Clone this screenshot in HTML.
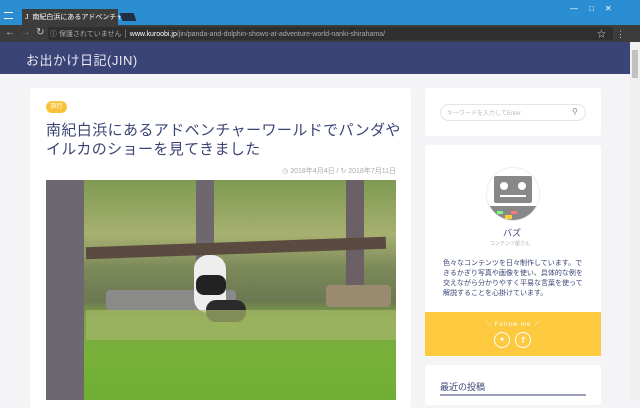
<!DOCTYPE html>
<html><head><meta charset="utf-8"><style>
*{margin:0;padding:0;box-sizing:border-box}
body{width:640px;height:400px;overflow:hidden;background:#f4f4f6;font-family:"Liberation Sans","Noto Sans CJK JP",sans-serif;position:relative}
.abs{position:absolute}
</style></head><body>
<div class="abs" style="left:0;top:0;width:640px;height:25px;background:#2b8ed3"></div>
<div class="abs" style="left:4px;top:12px;width:9px;height:7px;border:1px solid #fff;border-width:1px 0"></div>
<div class="abs" style="left:22px;top:9px;width:96px;height:16px;background:#3c3c3c"></div>
<div class="abs" style="left:25px;top:12px;font-size:7px;color:#fff;white-space:nowrap">J&nbsp; 南紀白浜にあるアドベンチャ ×</div>
<div class="abs" style="left:121px;top:13px;width:14px;height:8px;background:#1f2f44;transform:skewX(20deg)"></div>
<div class="abs" style="left:570px;top:4px;font-size:8px;color:#fff">—&nbsp;&nbsp;&nbsp;&nbsp;&nbsp;□&nbsp;&nbsp;&nbsp;&nbsp;&nbsp;✕</div>
<div class="abs" style="left:0;top:25px;width:640px;height:17px;background:#3c3c3c"></div>
<div class="abs" style="left:5px;top:27px;font-size:10px;color:#ccc">←&nbsp;&nbsp;<span style="color:#777">→</span>&nbsp;&nbsp;↻</div>
<div class="abs" style="left:48px;top:27px;width:565px;height:13px;background:#2f2f2f;border-radius:2px"></div>
<div class="abs" style="left:50px;top:29px;font-size:7px;color:#aaa;white-space:nowrap">ⓘ 保護されていません │ <span style="color:#fff">www.kuroobi.jp</span>/jin/panda-and-dolphin-shows-at-adventure-world-nanki-shirahama/</div>
<div class="abs" style="left:597px;top:27px;font-size:9px;color:#ccc">☆&nbsp;&nbsp;&nbsp;&nbsp;⋮</div>
<div class="abs" style="left:0;top:42px;width:630px;height:32px;background:#3b4476"></div>
<div class="abs" style="left:26px;top:50px;font-size:13px;color:#e8e8f0;letter-spacing:.5px">お出かけ日記(JIN)</div>
<div class="abs" style="left:630px;top:42px;width:10px;height:358px;background:#f0f0f0"></div>
<div class="abs" style="left:632px;top:50px;width:6px;height:28px;background:#c1c1c1"></div>
<div class="abs" style="left:30px;top:88px;width:381px;height:320px;background:#fff;border-radius:3px"></div>
<div class="abs" style="left:46px;top:101px;width:21px;height:12px;background:#f8c33a;border-radius:6px;color:#fff;font-size:6px;text-align:center;line-height:12px">旅行</div>
<div class="abs" style="left:46px;top:121px;white-space:nowrap;font-size:15px;letter-spacing:0.4px;line-height:19px;color:#3b4476">南紀白浜にあるアドベンチャーワールドでパンダや<br>イルカのショーを見てきました</div>
<div class="abs" style="left:200px;top:166px;width:196px;text-align:right;font-size:7px;color:#aaa;white-space:nowrap">◷ 2018年4月4日 / ↻ 2018年7月11日</div>
<div class="abs" style="left:46px;top:180px;width:350px;height:220px;overflow:hidden;background:linear-gradient(#7f9a52 0%,#a7b070 25%,#7c8a5a 40%,#6c7852 55%,#7aa444 62%,#78b13a 80%,#6fae35 100%)">
<div class="abs" style="left:0;top:0;width:38px;height:220px;background:#6d6770"></div>
<div class="abs" style="left:150px;top:0;width:18px;height:115px;background:#6f6770"></div>
<div class="abs" style="left:300px;top:0;width:18px;height:105px;background:#6a6066"></div>
<div class="abs" style="left:40px;top:62px;width:300px;height:12px;background:#5a4a40;transform:rotate(-2deg)"></div>
<div class="abs" style="left:60px;top:110px;width:130px;height:20px;background:#8a8a88;border-radius:4px"></div>
<div class="abs" style="left:280px;top:105px;width:65px;height:22px;background:#9a8a70;border-radius:4px"></div>
<div class="abs" style="left:148px;top:75px;width:32px;height:58px;background:#eee;border-radius:14px"></div>
<div class="abs" style="left:150px;top:95px;width:30px;height:20px;background:#222;border-radius:8px"></div>
<div class="abs" style="left:160px;top:120px;width:40px;height:22px;background:#2a2a2a;border-radius:10px"></div>
<div class="abs" style="left:40px;top:130px;width:310px;height:30px;background:#a7b66a;opacity:.7"></div>
</div>
<div class="abs" style="left:425px;top:88px;width:176px;height:48px;background:#fff;border-radius:3px"></div>
<div class="abs" style="left:440px;top:104px;width:146px;height:17px;border:1px solid #e4e4e4;border-radius:9px"></div>
<div class="abs" style="left:447px;top:108px;font-size:6px;color:#bbb">キーワードを入力してEnter</div>
<div class="abs" style="left:572px;top:107px;font-size:8px;color:#888">⚲</div>
<div class="abs" style="left:425px;top:145px;width:176px;height:212px;background:#fff;border-radius:3px"></div>
<div class="abs" style="left:486px;top:167px;width:54px;height:54px;border-radius:50%;background:#fff;border:1px solid #eee;overflow:hidden">
<div class="abs" style="left:7px;top:8px;width:38px;height:27px;background:#888;border-radius:2px"></div>
<div class="abs" style="left:13px;top:14px;width:8px;height:8px;background:#fff;border-radius:50%"></div>
<div class="abs" style="left:31px;top:14px;width:8px;height:8px;background:#fff;border-radius:50%"></div>
<div class="abs" style="left:13px;top:27px;width:26px;height:2px;background:#fff"></div>
<div class="abs" style="left:2px;top:38px;width:50px;height:16px;background:#888"></div>
<div class="abs" style="left:10px;top:43px;width:6px;height:3px;background:#7f7"></div>
<div class="abs" style="left:24px;top:43px;width:6px;height:3px;background:#f77"></div>
<div class="abs" style="left:18px;top:47px;width:7px;height:4px;background:#fc3"></div>
</div>
<div class="abs" style="left:503px;top:226px;font-size:9px;color:#3b4476">バズ</div>
<div class="abs" style="left:490px;top:240px;font-size:5px;color:#aaa">コンテンツ屋さん</div>
<div class="abs" style="left:443px;top:259px;width:145px;font-size:7px;line-height:10px;color:#3b4476">色々なコンテンツを日々制作しています。できるかぎり写真や画像を使い、具体的な例を交えながら分かりやすく平易な言葉を使って解説することを心掛けています。</div>
<div class="abs" style="left:425px;top:312px;width:176px;height:44px;background:#fcc93f"></div>
<div class="abs" style="left:425px;top:319px;width:176px;text-align:center;font-size:6px;color:#fff;letter-spacing:1px">＼ Follow me ／</div>
<div class="abs" style="left:494px;top:332px;width:16px;height:16px;border:1px solid #fff;border-radius:50%;color:#fff;font-size:8px;text-align:center;line-height:14px">✦</div>
<div class="abs" style="left:515px;top:332px;width:16px;height:16px;border:1px solid #fff;border-radius:50%;color:#fff;font-size:9px;font-weight:bold;text-align:center;line-height:14px">f</div>
<div class="abs" style="left:425px;top:365px;width:176px;height:40px;background:#fff;border-radius:3px"></div>
<div class="abs" style="left:440px;top:380px;font-size:9px;color:#3b4476">最近の投稿</div>
<div class="abs" style="left:440px;top:394px;width:146px;height:2px;background:#9aa0bc"></div>
</body></html>
